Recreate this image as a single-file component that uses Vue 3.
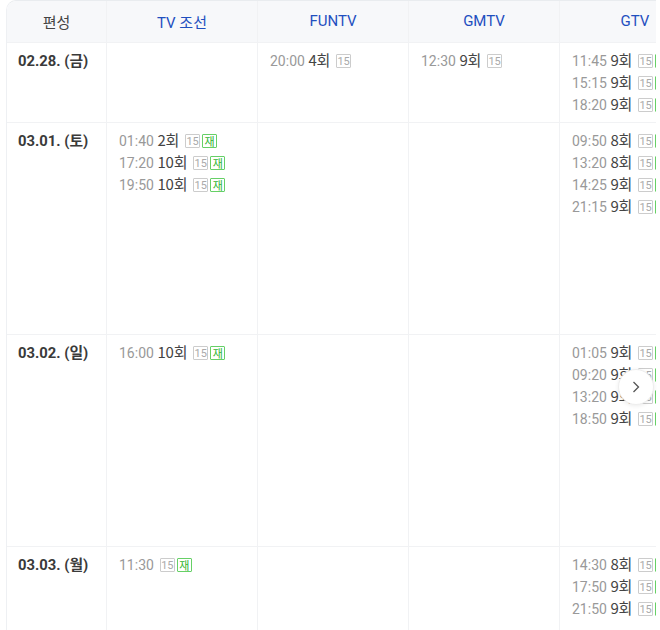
<script setup>
const channels = ['TV 조선', 'FUNTV', 'GMTV', 'GTV']
const rows = [
  { date: '02.28. (금)', height: 80, cells: [
    [],
    [['20:00', '4회', false]],
    [['12:30', '9회', false]],
    [['11:45', '9회', true], ['15:15', '9회', true], ['18:20', '9회', true]]
  ] },
  { date: '03.01. (토)', height: 212, cells: [
    [['01:40', '2회', true], ['17:20', '10회', true], ['19:50', '10회', true]],
    [],
    [],
    [['09:50', '8회', true], ['13:20', '8회', true], ['14:25', '9회', true], ['21:15', '9회', true]]
  ] },
  { date: '03.02. (일)', height: 212, cells: [
    [['16:00', '10회', true]],
    [],
    [],
    [['01:05', '9회', true], ['09:20', '9회', true], ['13:20', '9회', true], ['18:50', '9회', true]]
  ] },
  { date: '03.03. (월)', height: 212, cells: [
    [['11:30', '', true]],
    [],
    [],
    [['14:30', '8회', true], ['17:50', '9회', true], ['21:50', '9회', true]]
  ] }
]
</script>

<template>
  <div class="page">
    <div class="table">
      <div class="head row">
        <div class="cell-date th">편성</div>
        <div v-for="c in channels" :key="c" class="cell th link">{{ c }}</div>
      </div>
      <div v-for="r in rows" :key="r.date" class="row body" :style="{ height: r.height + 'px' }">
        <div class="cell-date date">{{ r.date }}</div>
        <div v-for="(cell, i) in r.cells" :key="i" class="cell slots">
          <div v-for="s in cell" :key="s[0]" class="slot">
            <span class="time">{{ s[0] }}</span>
            <span v-if="s[1]" class="ep">{{ s[1] }}</span>
            <span class="badges">
              <span class="badge age">15</span>
              <span v-if="s[2]" class="badge re">재</span>
            </span>
          </div>
        </div>
      </div>
    </div>
    <button class="next" aria-label="다음">
      <svg width="10" height="12" viewBox="0 0 10 12"><path d="M2.5 1 L7.5 6 L2.5 11" fill="none" stroke="#555" stroke-width="1.3"/></svg>
    </button>
  </div>
</template>

<style>
html, body { background: #fff; }
</style>

<style scoped>
.page {
  position: relative;
  width: 660px;
  height: 630px;
  overflow: hidden;
  padding-left: 6px;
  box-sizing: border-box;
  font-family: Roboto, "Noto Sans CJK KR", sans-serif;
  font-size: 15px;
  color: #333;
}
.table {
  width: 650px;
  overflow: hidden;
  border-top: 1px solid #e9ecef;
  border-left: 1px solid #eef0f3;
  border-top-left-radius: 10px;
  box-sizing: border-box;
}
.row {
  display: flex;
  width: 700px;
  box-sizing: border-box;
}
.head {
  height: 42px;
  background: #f7f8fa;
  border-bottom: 1px solid #f1f2f4;
  box-sizing: border-box;
}
.body { border-bottom: 1px solid #f1f2f4; }
.cell-date {
  width: 100px;
  flex: none;
  border-right: 1px solid #f1f2f4;
  box-sizing: border-box;
}
.cell {
  width: 151px;
  flex: none;
  border-right: 1px solid #f1f2f4;
  box-sizing: border-box;
}
.th {
  display: flex;
  align-items: center;
  justify-content: center;
  color: #444;
  padding-bottom: 1px;
}
.link { color: #1f4fbf; }
.date {
  padding: 7px 0 0 11px;
  line-height: 22px;
  font-size: 14.8px;
  font-weight: 700;
  color: #3a3a3a;
}
.slots { padding: 6px 0 0 12px; }
.slot {
  display: flex;
  align-items: center;
  height: 22px;
  white-space: nowrap;
}
.time { color: #999; font-size: 14px; padding-top: 2px; }
.ep {
  color: #444;
  margin-left: 3.5px;
  padding-bottom: 2px;
  font-family: "Noto Sans CJK KR", sans-serif;
  letter-spacing: -0.2px;
}
.badges { display: flex; gap: 2px; margin-left: 6px; padding-top: 2px; }
.badge {
  display: flex;
  align-items: center;
  justify-content: center;
  width: 15px;
  height: 14px;
  font-size: 11px;
  border: 1px solid;
  border-radius: 1px;
  box-sizing: border-box;
}
.age { color: #aaa; border-color: #ccc; }
.re { color: #2fb52f; border-color: #66d066; }
.next {
  position: absolute;
  left: 618px;
  top: 369px;
  width: 36px;
  height: 36px;
  border-radius: 50%;
  border: 1px solid #eee;
  background: #fff;
  box-shadow: 0 1px 4px rgba(0, 0, 0, 0.08);
  display: flex;
  align-items: center;
  justify-content: center;
  padding: 0;
}
</style>
